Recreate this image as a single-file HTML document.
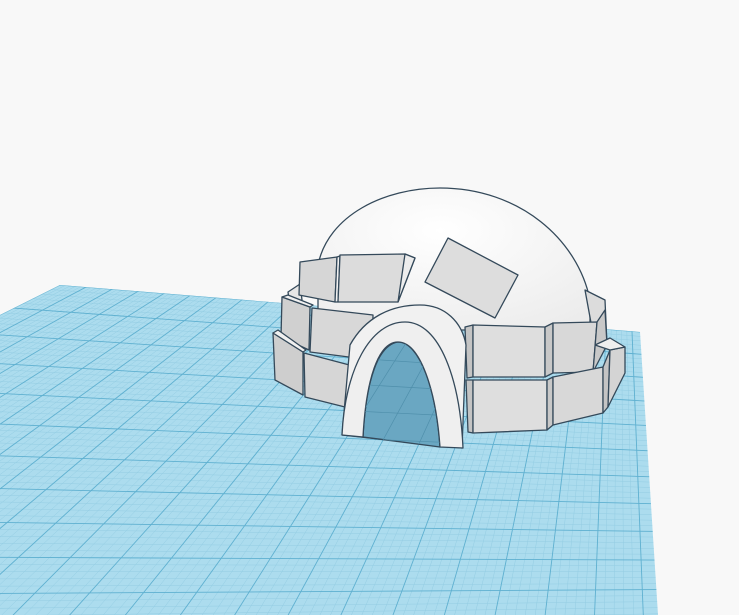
<!DOCTYPE html>
<html><head><meta charset="utf-8"><style>
html,body{margin:0;padding:0;background:#f8f8f8;width:739px;height:615px;overflow:hidden;}
svg{display:block}
</style></head><body>
<svg id="s" width="739" height="615" viewBox="0 0 739 615" xmlns="http://www.w3.org/2000/svg" style="overflow:hidden">
<defs>
<clipPath id="pl"><polygon points="60,285 640,332 658,615 0,615 0,315"/></clipPath>
<clipPath id="door"><path d="M363,437 C366,380 378,345 398,342 C420,342 436,390 440,447 Z"/></clipPath>
<radialGradient id="dg" cx="0.45" cy="0.3" r="0.8"><stop offset="0" stop-color="#ffffff"/><stop offset="1" stop-color="#ececec"/></radialGradient>
</defs>
<rect width="739" height="615" fill="#f8f8f8"/>
<g clip-path="url(#pl)">
<rect width="739" height="615" fill="#acdcee"/>
<g id="fine" stroke="#94cde3" stroke-width="0.5"></g>
<g id="major" stroke="#5fb0d0" stroke-width="0.9"></g>
</g>
<g stroke="#34495a" stroke-width="1.3" stroke-linejoin="round">
<path d="M318,265 C328,215 385,188 440,188 C520,188 578,240 590,300 L590,330 L318,330 Z" fill="url(#dg)"/>
<polygon points="288,292 300,284 302,300 290,306" fill="#e6e6e6"/>
<polygon points="585,290 605,300 607,345 596,350" fill="#dcdcdc"/>
<polygon points="300,262 337,257 335,302 299,295" fill="#d6d6d6"/>
<polygon points="337,257 340,256 338,302 335,302" fill="#f2f2f2"/>
<polygon points="340,255 405,254 415,258 398,302 338,302" fill="#dcdcdc"/>
<polygon points="405,254 415,258 398,302" fill="#ededed"/>
<polygon points="448,238 518,275 495,318 425,282" fill="#dddddd"/>
<polygon points="282,297 310,307 309,350 281,337" fill="#d0d0d0"/>
<polygon points="282,297 288,295 313,305 310,307" fill="#f0f0f0"/>
<polygon points="312,308 373,315 372,360 310,352" fill="#d8d8d8"/>
<polygon points="273,333 303,352 303,395 275,380" fill="#cecece"/>
<polygon points="273,333 278,330 306,350 303,352" fill="#f0f0f0"/>
<polygon points="304,353 357,367 357,410 305,397" fill="#d6d6d6"/>
<polygon points="465,327 473,325 473,377 467,378" fill="#c4c4c4"/>
<polygon points="473,325 545,327 545,377 473,377" fill="#dedede"/>
<polygon points="545,327 553,323 553,373 545,377" fill="#c8c8c8"/>
<polygon points="553,323 597,322 593,372 553,373" fill="#d8d8d8"/>
<polygon points="597,322 605,310 607,345 593,372" fill="#c8c8c8"/>
<polygon points="466,380 473,380 473,433 468,432" fill="#c4c4c4"/>
<polygon points="473,380 547,380 547,430 473,433" fill="#dedede"/>
<polygon points="547,380 553,377 553,425 547,430" fill="#c8c8c8"/>
<polygon points="553,377 603,367 603,413 553,425" fill="#d8d8d8"/>
<polygon points="603,367 610,350 608,407 603,413" fill="#c4c4c4"/>
<polygon points="610,350 625,347 625,373 608,407" fill="#d4d4d4"/>
<polygon points="595,345 610,338 625,347 610,350" fill="#efefef"/>
<path d="M350,345 C365,318 390,305 420,305 C445,305 462,322 466,345 L462,448 L342,435 Z" fill="#f1f1f1"/>
<path d="M363,437 C366,380 378,345 398,342 C420,342 436,390 440,447 Z" fill="#6aa7c2"/>
<path d="M342,435 C345,370 370,322 405,322 C440,322 460,380 463,448 L440,447 C436,390 420,342 398,342 C378,342 366,380 363,437 Z" fill="#efefef"/>
</g>
<g id="doorgrid" clip-path="url(#door)" stroke="#4f8fab" stroke-width="0.7"></g>
<script>
(function(){
var NS="http://www.w3.org/2000/svg";
var vb=[619,5], va=[3600,572];
function ln(g,x1,y1,x2,y2){var l=document.createElementNS(NS,"line");l.setAttribute("x1",x1);l.setAttribute("y1",y1);l.setAttribute("x2",x2);l.setAttribute("y2",y2);g.appendChild(l);}
function ext(p,v,y){var t=(y-v[1])/(p[1]-v[1]);return [v[0]+(p[0]-v[0])*t,y];}
var fine=document.getElementById("fine"),major=document.getElementById("major"),dg=document.getElementById("doorgrid");
for(var i=-80;i<=110;i++){
 var x=60+i*26/5, y=285+0.081*(x-60);
 var p=[x,y];var a=ext(p,vb,y-10),b=ext(p,vb,640);
 ln(i%5==0?major:fine,a[0],a[1],b[0],b[1]);
 if(i%5==0)ln(dg,a[0],a[1],b[0],b[1]);
}
var t=0,step=22;
for(var j=0;j<300;j++){
 var yy=332+t, xx=640+18*t/283;
 if(yy>640)break;
 var dx=va[0]-xx,dy=va[1]-yy;
 var k=-700/dx; ln(j%5==0?major:fine,xx+dx*k,yy+dy*k,xx+dx*0.03,yy+dy*0.03);
 if(j%5==0)ln(dg,xx+dx*k,yy+dy*k,xx+dx*0.03,yy+dy*0.03);
 t+=step/5*(1+t/700);
}
})();
</script>
</svg>
</body></html>
